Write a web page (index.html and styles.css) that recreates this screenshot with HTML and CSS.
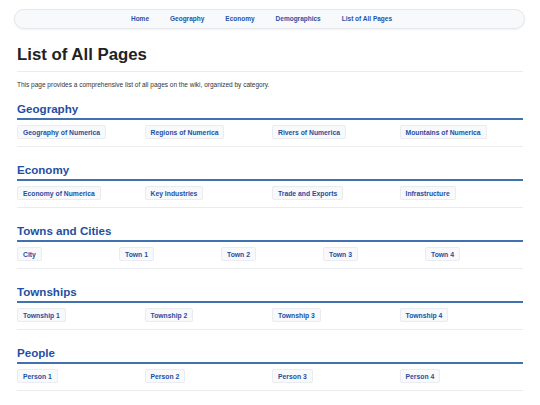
FILE: index.html
```html
<!DOCTYPE html>
<html lang="en">
<head>
<meta charset="utf-8">
<title>List of All Pages</title>
<link rel="stylesheet" href="styles.css">
</head>
<body>
<div class="wrap">
  <nav class="topnav">
    <ul class="topnav-list">
      <li><a href="#">Home</a></li>
      <li><a href="#">Geography</a></li>
      <li><a href="#">Economy</a></li>
      <li><a href="#">Demographics</a></li>
      <li><a href="#">List of All Pages</a></li>
    </ul>
  </nav>
  <main class="content">
    <h1 class="title">List of All Pages</h1>
    <p class="intro">This page provides a comprehensive list of all pages on the wiki, organized by category.</p>

    <section class="cat">
      <h2 class="cat-title">Geography</h2>
      <ul class="cat-list">
        <li><a class="chip" href="#">Geography of Numerica</a></li>
        <li><a class="chip" href="#">Regions of Numerica</a></li>
        <li><a class="chip" href="#">Rivers of Numerica</a></li>
        <li><a class="chip" href="#">Mountains of Numerica</a></li>
      </ul>
    </section>

    <section class="cat">
      <h2 class="cat-title">Economy</h2>
      <ul class="cat-list">
        <li><a class="chip" href="#">Economy of Numerica</a></li>
        <li><a class="chip" href="#">Key Industries</a></li>
        <li><a class="chip" href="#">Trade and Exports</a></li>
        <li><a class="chip" href="#">Infrastructure</a></li>
      </ul>
    </section>

    <section class="cat">
      <h2 class="cat-title">Towns and Cities</h2>
      <ul class="cat-list">
        <li><a class="chip" href="#">City</a></li>
        <li><a class="chip" href="#">Town 1</a></li>
        <li><a class="chip" href="#">Town 2</a></li>
        <li><a class="chip" href="#">Town 3</a></li>
        <li><a class="chip" href="#">Town 4</a></li>
      </ul>
    </section>

    <section class="cat">
      <h2 class="cat-title">Townships</h2>
      <ul class="cat-list">
        <li><a class="chip" href="#">Township 1</a></li>
        <li><a class="chip" href="#">Township 2</a></li>
        <li><a class="chip" href="#">Township 3</a></li>
        <li><a class="chip" href="#">Township 4</a></li>
      </ul>
    </section>

    <section class="cat">
      <h2 class="cat-title">People</h2>
      <ul class="cat-list">
        <li><a class="chip" href="#">Person 1</a></li>
        <li><a class="chip" href="#">Person 2</a></li>
        <li><a class="chip" href="#">Person 3</a></li>
        <li><a class="chip" href="#">Person 4</a></li>
      </ul>
    </section>
  </main>
</div>
</body>
</html>
```

FILE: styles.css
```css
html, body {
  margin: 0;
  padding: 0;
  background: #ffffff;
}

body {
  font-family: "Liberation Sans", Arial, sans-serif;
  color: #222222;
}

.wrap {
  padding: 9px 15px 0 14px;
}

/* top navigation pill */
.topnav {
  height: 20px;
  box-sizing: border-box;
  background: #f8f9fa;
  border: 1px solid #e4e7eb;
  border-radius: 10px;
  box-shadow: 0 1px 2px rgba(0, 0, 0, 0.06);
}

.topnav-list {
  display: flex;
  justify-content: center;
  align-items: center;
  gap: 21px;
  height: 100%;
  margin: 0;
  padding: 0 16px 0 0;
  list-style: none;
}

.topnav-list li {
  display: flex;
}

.topnav-list a {
  font-size: 6.5px;
  line-height: 8px;
  font-weight: bold;
  color: #1f52a8;
  text-decoration: none;
}

.content {
  padding: 0 2px 0 3px;
}

.title {
  margin: 16px 0 0;
  padding-bottom: 6px;
  font-size: 16.8px;
  line-height: 20px;
  font-weight: bold;
  color: #222222;
  border-bottom: 1px solid #eaecf0;
}

.intro {
  margin: 9px 0 12px;
  font-size: 6.5px;
  line-height: 8px;
  color: #333333;
}

/* category blocks */
.cat {
  padding-bottom: 7px;
  margin-bottom: 15px;
  border-bottom: 1px solid #eaecf0;
}

.cat-title {
  margin: 0 0 5px;
  padding-bottom: 2px;
  font-size: 11.6px;
  line-height: 15px;
  font-weight: bold;
  color: #1f4fa3;
  border-bottom: 2px solid #4271b0;
}

.cat-list {
  display: flex;
  gap: 4px;
  margin: 0;
  padding: 0;
  list-style: none;
}

.cat-list li {
  display: flex;
  flex: 1 1 0;
  min-width: 0;
}

.chip {
  display: flex;
  align-items: center;
  height: 14px;
  padding: 0 5px;
  box-sizing: border-box;
  font-size: 6.8px;
  font-weight: bold;
  color: #1f4fa3;
  text-decoration: none;
  background: #f8f9fa;
  border: 1px solid #eaecf0;
  border-radius: 2px;
}
```
